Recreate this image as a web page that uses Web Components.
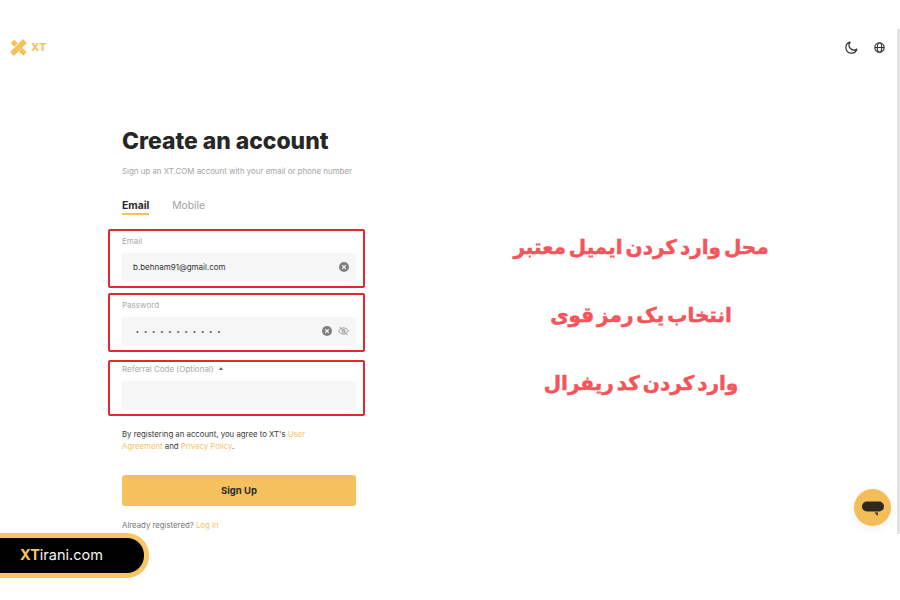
<!DOCTYPE html>
<html>
<head>
<meta charset="utf-8">
<style>
  html, body { margin: 0; height: 100%; background: #fff; }
  body { font-family: Inter, "Liberation Sans", sans-serif; overflow: hidden; }
</style>
</head>
<body>
<signup-page>
  <top-bar slot="top"></top-bar>
  <signup-form slot="form"></signup-form>
  <note-list slot="notes">
    <li>محل وارد کردن ایمیل معتبر</li>
    <li>انتخاب یک رمز قوی</li>
    <li>وارد کردن کد ریفرال</li>
  </note-list>
</signup-page>
<brand-pill></brand-pill>
<chat-button></chat-button>

<script>
// page frame: header on top, form and notes in two columns
class SignupPage extends HTMLElement {
  constructor() {
    super();
    this.attachShadow({ mode: "open" });
    this.shadowRoot.innerHTML = `
      <style>
        :host { display: block; height: 600px; box-sizing: border-box; border-right: 3px solid transparent; }
        main { display: grid; grid-template-columns: 108px 257px 1fr; }
        .form { grid-column: 2; }
        /* the page scrollbar, drawn over the right edge */
        .scroll { position: absolute; left: 897px; top: 29px; width: 3px; height: 505px; background: #e2e2e2; }
      </style>
      <slot name="top"></slot>
      <main>
        <div class="form"><slot name="form"></slot></div>
        <slot name="notes"></slot>
      </main>
      <div class="scroll"></div>
    `;
  }
}
customElements.define("signup-page", SignupPage);

class TopBar extends HTMLElement {
  constructor() {
    super();
    this.attachShadow({ mode: "open" });
    this.shadowRoot.innerHTML = `
      <style>
        :host { display: flex; align-items: center; justify-content: space-between; height: 126px; padding: 0 12px 32px 10px; box-sizing: border-box; }
        .logo { display: flex; align-items: center; gap: 4px; color: #f6c15b; font: 800 11px Inter, sans-serif; }
        .tools { display: flex; align-items: center; gap: 16px; }
        svg { display: block; }
      </style>
      <div class="logo">
        <svg width="17" height="17" viewBox="0 0 17 17" fill="none" stroke="#f6c15b">
          <path d="M15 2 2 15" stroke-width="5.5"/>
          <path d="M2.5 2.5 6 6" stroke-width="5"/>
          <path d="M10.5 10.5 15 15" stroke-width="5"/>
        </svg>
        <span>XT</span>
      </div>
      <div class="tools">
        <svg width="13" height="13" viewBox="0 0 14 14" fill="none" stroke="#333" stroke-width="1.3">
          <path d="M5.6 1.2A6 6 0 1 0 12.8 8.6 5.2 5.2 0 0 1 5.6 1.2Z" stroke-linejoin="round"/>
        </svg>
        <svg width="11" height="11" viewBox="0 0 11 11" fill="none" stroke="#333" stroke-width="1.1">
          <circle cx="5.5" cy="5.5" r="4.7"/>
          <ellipse cx="5.5" cy="5.5" rx="2.2" ry="4.7"/>
          <path d="M1 5.5H10"/>
        </svg>
      </div>
    `;
  }
}
customElements.define("top-bar", TopBar);

// one input with its label, wrapped in the red marker frame
class FormField extends HTMLElement {
  constructor() {
    super();
    this.attachShadow({ mode: "open" });
  }

  connectedCallback() {
    const label = this.getAttribute("label");
    this.shadowRoot.innerHTML = `
      <style>
        :host { display: block; box-sizing: border-box; border: 2px solid #e0282e; border-radius: 2px; padding: 4px 7px 5px 12px; }
        .label { display: flex; align-items: center; gap: 5px; height: 11px; margin-bottom: 7px; font-size: 8px; color: #a9a9a9; }
        .box { display: flex; align-items: center; gap: 6px; height: 28px; padding: 0 7px 0 11px; background: #f6f6f7; border-radius: 3px; font-size: 8px; color: #333; }
        .value { flex: 1; }
        ::slotted(svg) { display: block; }
      </style>
      <div class="label">${label}<slot name="label-end"></slot></div>
      <div class="box"><div class="value"><slot></slot></div><slot name="end"></slot></div>
    `;
  }
}
customElements.define("form-field", FormField);

const clearIcon = `<svg slot="end" width="10" height="10" viewBox="0 0 10 10"><circle cx="5" cy="5" r="5" fill="#808080"/><path d="M3.2 3.2 6.8 6.8M6.8 3.2 3.2 6.8" stroke="#f6f6f7" stroke-width="1.2"/></svg>`;
const eyeIcon = `<svg slot="end" width="11" height="10" viewBox="0 0 11 10" fill="none" stroke="#999" stroke-width="1"><path d="M.6 5C2 2.8 3.6 1.9 5.5 1.9S9 2.8 10.4 5C9 7.2 7.4 8.1 5.5 8.1S2 7.2.6 5Z"/><circle cx="5.5" cy="5" r="1.5"/><path d="M1.8.8 9.4 9.2"/></svg>`;

class SignupForm extends HTMLElement {
  constructor() {
    super();
    this.attachShadow({ mode: "open" });
    this.shadowRoot.innerHTML = `
      <style>
        :host { display: block; }
        .inner { padding: 0 9px 0 14px; }
        h1 { margin: 0; font-size: 22.9px; line-height: 30px; font-weight: 800; color: #272727; white-space: nowrap; }
        .sub { margin: 10px 0 0; font-size: 7.9px; line-height: 11px; color: #a5a5a5; white-space: nowrap; }
        .tabs { display: flex; gap: 23px; margin: 21px 0 14px; font-size: 10.3px; line-height: 14px; color: #a2a2a2; }
        .tabs b { color: #272727; font-weight: 700; padding-bottom: 1px; border-bottom: 2px solid #f5c15c; }
        .fields { display: flex; flex-direction: column; }
        #pw { margin-top: 5px; }
        #ref { margin-top: 8px; padding-top: 1px; padding-bottom: 5px; }
        .dots { letter-spacing: 5.3px; font-size: 6px; font-weight: 700; padding-left: 3px; color: #333; }
        .caret { width: 0; height: 0; border: 2.5px solid transparent; border-bottom: 3px solid #666; border-top: 0; }
        .terms { margin: 13px 0 0; max-width: 195px; font-size: 7.8px; line-height: 11.5px; color: #3a3a3a; }
        a { color: #f3c469; text-decoration: none; }
        button { display: block; width: 100%; height: 31px; margin-top: 23px; border: 0; border-radius: 3px; background: #f5c15c; color: #2b2b2b; font: 700 9.5px Inter, sans-serif; }
        .login { margin: 14px 0 0; font-size: 7.8px; line-height: 11px; color: #777; }
      </style>
      <div class="inner">
        <h1>Create an account</h1>
        <p class="sub">Sign up an XT.COM account with your email or phone number</p>
        <div class="tabs"><b>Email</b><span>Mobile</span></div>
      </div>
      <div class="fields">
        <form-field label="Email">b.behnam91@gmail.com${clearIcon}</form-field>
        <form-field id="pw" label="Password"><span class="dots">•••••••••••</span>${clearIcon}${eyeIcon}</form-field>
        <form-field id="ref" label="Referral Code (Optional)"><span slot="label-end" class="caret"></span></form-field>
      </div>
      <div class="inner">
        <p class="terms">By registering an account, you agree to XT's <a>User Agreement</a> and <a>Privacy Policy</a>.</p>
        <button>Sign Up</button>
        <p class="login">Already registered? <a>Log In</a></p>
      </div>
    `;
  }
}
customElements.define("signup-form", SignupForm);

class NoteList extends HTMLElement {
  constructor() {
    super();
    this.attachShadow({ mode: "open" });
    this.shadowRoot.innerHTML = `
      <style>
        :host { display: flex; flex-direction: column; align-items: center; gap: 38px; padding-top: 106px; padding-left: 20px; direction: rtl; font: 700 20px/30px "DejaVu Sans", "Noto Sans", sans-serif; word-spacing: -4px; color: #f4545a; -webkit-text-stroke: .5px #f4545a; }
        ::slotted(li) { display: block; white-space: nowrap; }
      </style>
      <slot></slot>
    `;
  }
}
customElements.define("note-list", NoteList);

// watermark pill stuck on the bottom left corner
class BrandPill extends HTMLElement {
  constructor() {
    super();
    this.attachShadow({ mode: "open" });
    this.shadowRoot.innerHTML = `
      <style>
        :host { position: absolute; left: 0; top: 533px; box-sizing: border-box; width: 149px; height: 45px; padding: 0 0 2px 20px; display: flex; align-items: center; background: #000; border: 5px solid #f8c662; border-left: 0; border-radius: 0 22px 22px 0; color: #f4f4f4; font: 400 14.5px Inter, sans-serif; }
        b { color: #f8c662; font-weight: 700; }
      </style>
      <span><b>XT</b>irani.com</span>
    `;
  }
}
customElements.define("brand-pill", BrandPill);

class ChatButton extends HTMLElement {
  constructor() {
    super();
    this.attachShadow({ mode: "open" });
    this.shadowRoot.innerHTML = `
      <style>
        :host { position: absolute; left: 854px; top: 489px; width: 37px; height: 37px; border-radius: 50%; background: #f5bd58; display: flex; align-items: center; justify-content: center; box-shadow: 0 2px 8px rgba(0,0,0,.08); }
      </style>
      <svg width="22" height="17" viewBox="0 0 22 17"><rect x="0" y="2.5" width="22" height="10" rx="5" fill="#2f2a20"/><path d="M12.5 13.5H16L15.5 17Z" fill="#2f2a20"/></svg>
    `;
  }
}
customElements.define("chat-button", ChatButton);
</script>
</body>
</html>
